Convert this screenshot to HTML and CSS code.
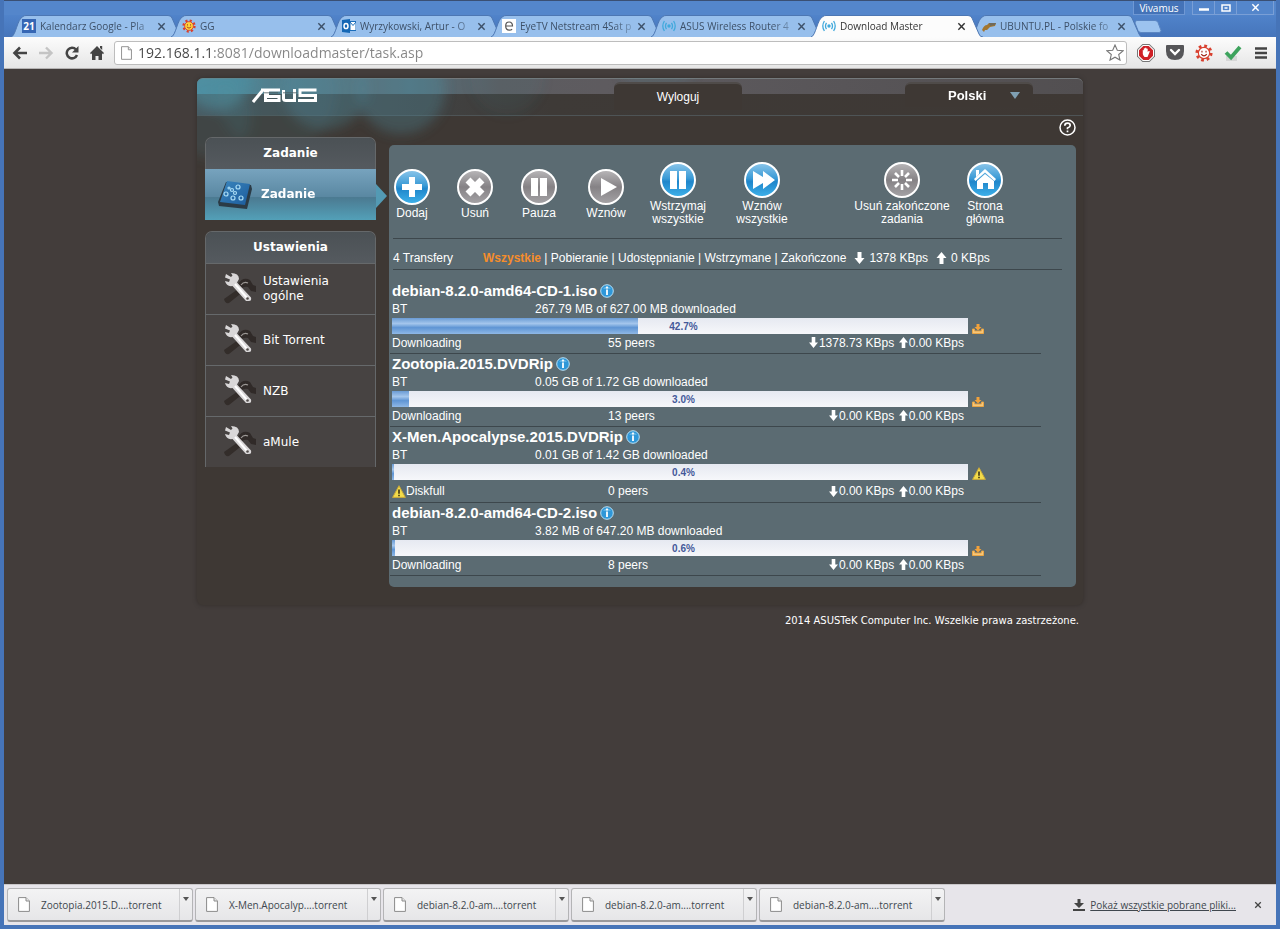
FILE: index.html
```html
<!DOCTYPE html>
<html lang="pl">
<head>
<meta charset="utf-8">
<title>Download Master</title>
<link rel="stylesheet" href="styles.css">
</head>
<body>
<svg class="defs" aria-hidden="true">
  <defs>
    <linearGradient id="g-blue" x1="0" y1="0" x2="0" y2="1"><stop offset="0" stop-color="#8cc6ea"/><stop offset=".45" stop-color="#3b9bd6"/><stop offset=".55" stop-color="#1f86cb"/><stop offset="1" stop-color="#3fb2ea"/></linearGradient>
    <linearGradient id="g-gray" x1="0" y1="0" x2="0" y2="1"><stop offset="0" stop-color="#b9b7b9"/><stop offset=".5" stop-color="#858285"/><stop offset="1" stop-color="#a5a3a6"/></linearGradient>
    <linearGradient id="g-pad" x1="0" y1="0" x2="1" y2="1"><stop offset="0" stop-color="#3b86bd"/><stop offset="1" stop-color="#1c5c9d"/></linearGradient>
    <filter id="soft" x="-30%" y="-60%" width="160%" height="220%"><feGaussianBlur stdDeviation="6"/></filter>
  </defs>
  <symbol id="tab-shape" viewBox="0 0 176 22" preserveAspectRatio="none"><path d="M0 22C5 21 6 4 12 1.500Q13 .5 15 .5H157Q160 .5 161 3L168 19Q169 22 172 22" fill="currentColor" stroke="#4d77b3" stroke-width="1"/></symbol>
  <symbol id="x" viewBox="0 0 10 10"><path d="M1.500 1.500l7 7M8.500 1.500l-7 7" stroke="currentColor" stroke-width="1.600"/></symbol>
  <symbol id="down" viewBox="0 0 10 12"><path d="M3 0h4v6h3L5 12 0 6h3z" fill="#fff"/></symbol>
  <symbol id="up" viewBox="0 0 10 12"><path d="M3 12h4V6h3L5 0 0 6h3z" fill="#fff"/></symbol>
  <symbol id="info" viewBox="0 0 14 14"><circle cx="7" cy="7" r="6.300" fill="#2f97d8" stroke="#b9e0f5"/><path d="M3 4.500a5 4 0 0 1 8 0" fill="#8ccdf0"/><path d="M7 2.600v1.800M7 5.400v5.600" stroke="#fff" stroke-width="1.800"/></symbol>
  <symbol id="warn" viewBox="0 0 14 13"><path d="M7 .7L13.400 12.400H.6z" fill="#f3dc4a" stroke="#c9a93a" stroke-width="1"/><path d="M7 4.500v4.200M7 9.700v1.500" stroke="#3b3213" stroke-width="1.600"/></symbol>
  <symbol id="tray" viewBox="0 0 12 10"><path d="M.5 5h2v2h7V5h2v4.500H.5z" fill="#f6c679" stroke="#e9a545"/><path d="M4.500 0h3v3H9.500L6 6.500 2.500 3h2z" fill="#f3a23a"/></symbol>
  <symbol id="page" viewBox="0 0 12 15"><path d="M.6.6H8L11.400 4V14.400H.6z" fill="#fff" stroke="#8b8b8b"/><path d="M8 .6V4h3.400" fill="#e8e8e8" stroke="#8b8b8b"/></symbol>
  <symbol id="wifi" viewBox="0 0 14 12"><circle cx="7" cy="6" r="1.700" fill="#41a9dc"/><path d="M4.500 2.800q-2 3.200 0 6.400M9.500 2.800q2 3.200 0 6.400M2.400 1Q-.8 6 2.400 11M11.600 1q3.200 5 0 10" fill="none" stroke="#41a9dc" stroke-width="1.300"/></symbol>
  <symbol id="sun" viewBox="0 0 16 16"><circle cx="8" cy="8" r="6.200" fill="none" stroke="#d8402f" stroke-width="2.800" stroke-dasharray="2.400 2.470"/><circle cx="8" cy="8" r="5" fill="currentColor" stroke="#d8402f"/><path d="M6.200 6v1.500M9.800 6v1.500M5.500 9q2.500 3 5 0" fill="none" stroke="#a02a1e"/></symbol>
  <symbol id="tools" viewBox="0 0 36 34"><path d="M3 27l17-12 3 4L8 31q-4 1-5-4z" fill="#332d2a"/><path d="M17 12q5-8 12-4l3 5 3 1v6l-5-1-3-4q-5-1-8 3z" fill="#302a28"/><path d="M20 13q3-4 7-2" fill="none" stroke="#9c9895" stroke-width="1.200"/><path d="M5 2l5 3 1.500-1.500L10 1q8 0 8 6l-2 3.500 14 15q1 4-3 3.500h-2L11.500 14q-6 1-7.500-5l4 1 1-2.500-5-2z" fill="#d9d7d8"/><path d="M14 12l12 14" stroke="#fff" stroke-width="2"/><circle cx="26.500" cy="26.500" r="1.300" fill="#514c4a"/></symbol>
</svg>

<header class="titlebar">
  <button class="user">Vivamus</button>
  <div class="controls">
    <button aria-label="Minimalizuj"><svg width="10" height="8" viewBox="0 0 10 8"><path d="M0 5.500h10" stroke="#fff" stroke-width="2.500"/></svg></button>
    <button aria-label="Maksymalizuj"><svg width="10" height="8" viewBox="0 0 10 8"><path d="M1 1h8v6H1zM3.500 4h3" fill="none" stroke="#fff" stroke-width="1.500"/></svg></button>
    <button class="close" aria-label="Zamknij"><svg width="9" height="9"><use href="#x"/></svg></button>
  </div>
</header>

<nav class="tabs" aria-label="Karty">
  <div class="tab"><svg class="shape"><use href="#tab-shape"/></svg><svg class="fav" viewBox="0 0 14 14"><path d="M0 0h14v14H0z" fill="#3566b4"/><text x="7" y="11" class="cal">21</text></svg><span class="label">Kalendarz Google - Pla</span><button aria-label="Zamknij kartę"><svg width="9" height="9"><use href="#x"/></svg></button></div>
  <div class="tab"><svg class="shape"><use href="#tab-shape"/></svg><svg class="fav sunny"><use href="#sun"/></svg><span class="label">GG</span><button aria-label="Zamknij kartę"><svg width="9" height="9"><use href="#x"/></svg></button></div>
  <div class="tab"><svg class="shape"><use href="#tab-shape"/></svg><svg class="fav" viewBox="0 0 14 14"><path d="M8 2.500h6v9H8z" fill="#fff" stroke="#1a6dba"/><path d="M8 3l3 3.500L14 3" fill="none" stroke="#1a6dba"/><path d="M0 1l8-1v14l-8-1z" fill="#1467b5"/><ellipse cx="4" cy="7" rx="2" ry="2.600" fill="none" stroke="#fff" stroke-width="1.500"/></svg><span class="label">Wyrzykowski, Artur - O</span><button aria-label="Zamknij kartę"><svg width="9" height="9"><use href="#x"/></svg></button></div>
  <div class="tab"><svg class="shape"><use href="#tab-shape"/></svg><svg class="fav" viewBox="0 0 14 14"><path d="M0 0h14v14H0z" fill="#fff"/><path d="M4 7h6.500q0-4-3.400-4T3.700 7t3.600 4.200q1.700 0 2.800-1" fill="none" stroke="#555" stroke-width="1.200"/></svg><span class="label">EyeTV Netstream 4Sat p</span><button aria-label="Zamknij kartę"><svg width="9" height="9"><use href="#x"/></svg></button></div>
  <div class="tab"><svg class="shape"><use href="#tab-shape"/></svg><svg class="fav"><use href="#wifi"/></svg><span class="label">ASUS Wireless Router 4</span><button aria-label="Zamknij kartę"><svg width="9" height="9"><use href="#x"/></svg></button></div>
  <div class="tab active"><svg class="shape"><use href="#tab-shape"/></svg><svg class="fav"><use href="#wifi"/></svg><span class="label">Download Master</span><button aria-label="Zamknij kartę"><svg width="9" height="9"><use href="#x"/></svg></button></div>
  <div class="tab"><svg class="shape"><use href="#tab-shape"/></svg><svg class="fav" viewBox="0 0 14 14"><path d="M0 11q2-5 5-5l2-2 7 0-1 3-5 1-3 3-2 0-1 2z" fill="#a3762f"/><path d="M7 4h7l-1 2-5 1z" fill="#6f6a5c"/></svg><span class="label">UBUNTU.PL - Polskie fo</span><button aria-label="Zamknij kartę"><svg width="9" height="9"><use href="#x"/></svg></button></div>
  <button class="newtab" aria-label="Nowa karta"><svg width="28" height="13" viewBox="0 0 28 13"><path d="M3 .5h18q2 0 3 2l3 8q0 2-2 2H7q-2 0-3-2L1 3Q1 .5 3 .5z" fill="#9cc3ef" stroke="#5b86c2"/></svg></button>
</nav>

<div class="toolbar">
  <button aria-label="Wstecz"><svg width="16" height="14" viewBox="0 0 16 14"><path d="M15 7H3M8 1.500L2.500 7 8 12.500" fill="none" stroke="#444" stroke-width="2.600"/></svg></button>
  <button aria-label="Dalej"><svg width="16" height="14" viewBox="0 0 16 14"><path d="M1 7h12M8 1.500L13.500 7 8 12.500" fill="none" stroke="#c4c4c4" stroke-width="2.400"/></svg></button>
  <button aria-label="Odśwież"><svg width="16" height="14" viewBox="0 0 16 14"><path d="M12 3.500A5.300 5.300 0 1 0 13 9" fill="none" stroke="#444" stroke-width="2.500"/><path d="M14.500 0v6.500H8z" fill="#444"/></svg></button>
  <button aria-label="Strona startowa"><svg width="14" height="14" viewBox="0 0 14 14"><path d="M7 0l7 7-1 1.200-1-.9V14H8.500v-4h-3v4H2V7.300l-1 .9L0 7zM10 0h2.200v4L10 2z" fill="#444"/></svg></button>
  <div class="omnibox">
    <svg width="11" height="14"><use href="#page"/></svg>
    <input type="text" aria-label="Adres" value="192.168.1.1:8081/downloadmaster/task.asp">
    <button aria-label="Dodaj do zakładek"><svg width="18" height="17" viewBox="0 0 18 17"><path d="M9 1l2.300 5.300 5.700.5-4.300 3.700 1.300 5.600L9 13.200 4 16.100l1.300-5.600L1 6.800l5.700-.5z" fill="#fff" stroke="#777" stroke-width="1.100"/></svg></button>
  </div>
  <div class="extensions">
    <button aria-label="Blokada reklam"><svg width="18" height="18" viewBox="0 0 18 18"><path d="M5.500 0h7L18 5.500v7L12.500 18h-7L0 12.500v-7z" fill="#777"/><path d="M5.800 1h6.400L17 5.800v6.400L12.200 17H5.800L1 12.200V5.800z" fill="#fff"/><path d="M6.300 2h5.400L16 6.300v5.400L11.700 16H6.300L2 11.700V6.300z" fill="#cf2027"/><path d="M5.800 6q1-.5 1 1V4.600q1-.8 1.300 0V4q1-.8 1.300 0v.7q1-.6 1.300.3v3l1-1q1.300-.3 1 .8L10.500 13h-3Q5.800 11 5.800 10z" fill="#fff"/></svg></button>
    <button aria-label="Pocket"><svg width="18" height="15" viewBox="0 0 18 15"><path d="M1 0h16q1 0 1 1v5q0 9-9 9T0 6V1q0-1 1-1z" fill="#555558"/><path d="M5 5l4 4 4-4" fill="none" stroke="#fff" stroke-width="2.400" stroke-linecap="round"/></svg></button>
    <button aria-label="GG"><svg class="sunwhite" width="18" height="18"><use href="#sun"/></svg></button>
    <button aria-label="Sprawdź"><svg width="18" height="16" viewBox="0 0 18 16"><path d="M2 11h11v5H2z" fill="#d7d7d7"/><path d="M2 7.500L7 12.500 16 2" fill="none" stroke="#3da35d" stroke-width="3.800"/></svg></button>
    <button aria-label="Menu"><svg width="12" height="12" viewBox="0 0 12 12"><path d="M0 1.500h12M0 6h12M0 10.500h12" stroke="#444" stroke-width="2.500"/></svg></button>
  </div>
</div>

<main class="viewport">
  <div class="frame">
    <svg class="bubbles" aria-hidden="true">
      <g filter="url(#soft)" fill="#4d93a6"><circle cx="20" cy="-2" r="34" opacity=".5"/><circle cx="14" cy="40" r="40" opacity=".15"/><circle cx="128" cy="10" r="42" opacity=".28"/><circle cx="204" cy="12" r="44" opacity=".3"/><circle cx="80" cy="14" r="60" opacity=".13"/><circle cx="310" cy="0" r="36" opacity=".08"/><circle cx="460" cy="-20" r="40" opacity=".12"/></g>
    </svg>
    <header class="banner">
      <div class="brand">
        <svg class="logo" width="66" height="15" viewBox="0 0 66 15" role="img" aria-label="ASUS"><g fill="none" stroke="#fff" stroke-width="3"><path d="M1 14L10.500 2.500"/><path d="M9 2H13.500V14M15 8.500H27V12.500H14M28 2H15.500V8.500M31.500 2V10.500Q31.500 12.500 34 12.500H42.500V1M64.500 2H48V7.500H63.500V12.500H46"/></g><path d="M12 4.800h14M31 4.800h14M49 10h12" stroke="#4d585c" stroke-width=".8"/></svg>
      </div>
      <button class="chip logout">Wyloguj</button>
      <div class="chip lang">
        <select aria-label="Język"><option>Polski</option></select>
        <svg width="10" height="7" viewBox="0 0 10 7" aria-hidden="true"><path d="M0 0h10L5 7z" fill="#7f9fb2"/></svg>
      </div>
    </header>
    <div class="helprow"><button aria-label="Pomoc"><svg width="17" height="17" viewBox="0 0 17 17"><circle cx="8.500" cy="8.500" r="7.500" fill="none" stroke="#fff" stroke-width="1.500"/><path d="M5.800 6.800q0-2.600 2.700-2.600t2.700 2.300q0 1.500-2.700 2.500v1.300M8.500 11.500v1.800" fill="none" stroke="#fff" stroke-width="1.700"/></svg></button></div>

    <div class="columns">
      <aside class="sidebar">
        <section class="menu">
          <h2>Zadanie</h2>
          <a class="item current" href="#zadanie">
            <svg width="38" height="30" viewBox="0 0 38 30"><path d="M10 2L35 5l1 4-5 20L3 26l-1-4z" fill="#2b3b46"/><path d="M11 1l23 3-5 21-25-3z" fill="url(#g-pad)"/><g fill="none" stroke="#a9dcf5" stroke-width="1.200"><circle cx="13" cy="8" r="1"/><circle cx="16" cy="10" r="1.500"/><circle cx="22" cy="7" r="2"/><circle cx="10" cy="14" r="2"/><circle cx="19" cy="13" r="1.500"/><circle cx="17" cy="18" r="2"/><circle cx="25" cy="18" r="2"/></g></svg>
            <span>Zadanie</span>
          </a>
        </section>
        <section class="menu">
          <h2>Ustawienia</h2>
          <a class="item" href="#ogolne"><svg width="36" height="34"><use href="#tools"/></svg><span>Ustawienia ogólne</span></a>
          <a class="item" href="#bt"><svg width="36" height="34"><use href="#tools"/></svg><span>Bit Torrent</span></a>
          <a class="item" href="#nzb"><svg width="36" height="34"><use href="#tools"/></svg><span>NZB</span></a>
          <a class="item" href="#amule"><svg width="36" height="34"><use href="#tools"/></svg><span>aMule</span></a>
        </section>
      </aside>

      <section class="panel">
        <div class="actions">
          <button><svg class="ico" viewBox="0 0 36 36"><circle cx="18" cy="18" r="17" fill="url(#g-blue)" stroke="#fff" stroke-width="2"/><path d="M15 8h6v7h7v6h-7v7h-6v-7H8v-6h7z" fill="#fff"/></svg><span>Dodaj</span></button>
          <button><svg class="ico" viewBox="0 0 36 36"><circle cx="18" cy="18" r="17" fill="url(#g-gray)" stroke="#fff" stroke-width="2"/><path d="M11 11l14 14M25 11L11 25" stroke="#fff" stroke-width="7"/></svg><span>Usuń</span></button>
          <button><svg class="ico" viewBox="0 0 36 36"><circle cx="18" cy="18" r="17" fill="url(#g-gray)" stroke="#fff" stroke-width="2"/><path d="M10 9h7v18h-7zM19 9h7v18h-7z" fill="#fff"/></svg><span>Pauza</span></button>
          <button><svg class="ico" viewBox="0 0 36 36"><circle cx="18" cy="18" r="17" fill="url(#g-gray)" stroke="#fff" stroke-width="2"/><path d="M13 9l16 9-16 9z" fill="#fff"/></svg><span>Wznów</span></button>
          <button class="pair"><svg class="ico" viewBox="0 0 36 36"><circle cx="18" cy="18" r="17" fill="url(#g-blue)" stroke="#fff" stroke-width="2"/><path d="M10 9h7v18h-7zM19 9h7v18h-7z" fill="#fff"/></svg><span>Wstrzymaj wszystkie</span></button>
          <button class="pair"><svg class="ico" viewBox="0 0 36 36"><circle cx="18" cy="18" r="17" fill="url(#g-blue)" stroke="#fff" stroke-width="2"/><path d="M9 9l10 6V9l12 9-12 9v-6L9 27z" fill="#fff"/></svg><span>Wznów wszystkie</span></button>
          <button class="wide"><svg class="ico" viewBox="0 0 36 36"><circle cx="18" cy="18" r="17" fill="url(#g-gray)" stroke="#fff" stroke-width="2"/><path d="M18 8v6M18 22v6M8 18h6M22 18h6M11 11l4 4M21 21l4 4M25 11l-4 4M15 21l-4 4" stroke="#fff" stroke-width="2.600"/></svg><span>Usuń zakończone zadania</span></button>
          <button class="pair"><svg class="ico" viewBox="0 0 36 36"><circle cx="18" cy="18" r="17" fill="url(#g-blue)" stroke="#fff" stroke-width="2"/><path d="M7 17L18 7l11 10-1.500 2L18 10.500 8.500 19zM9 8h3v4l-3 3zM10 19l8-7 9 7v8h-6v-6h-5v6h-6z" fill="#fff"/></svg><span>Strona główna</span></button>
        </div>

        <div class="filters">
          <span class="count">4 Transfery</span>
          <span class="links"><a class="on" href="#w">Wszystkie</a> | <a href="#p">Pobieranie</a> | <a href="#u">Udostępnianie</a> | <a href="#s">Wstrzymane</a> | <a href="#z">Zakończone</a></span>
          <span class="total"><svg width="11" height="12"><use href="#down"/></svg>1378 KBps</span>
          <span class="total"><svg width="11" height="12"><use href="#up"/></svg>0 KBps</span>
        </div>

        <ul class="tasks">
          <li>
            <h3>debian-8.2.0-amd64-CD-1.iso <svg width="14" height="14"><use href="#info"/></svg></h3>
            <div class="meta"><span>BT</span><span>267.79 MB of 627.00 MB downloaded</span></div>
            <div class="progress"><div class="bar"><div class="fill" style="width:42.7%"></div><span class="pct">42.7%</span></div><svg width="12" height="10"><use href="#tray"/></svg></div>
            <div class="status"><span>Downloading</span><span>55 peers</span><span class="speed"><svg width="9" height="11"><use href="#down"/></svg>1378.73 KBps <svg width="9" height="11"><use href="#up"/></svg>0.00 KBps</span></div>
          </li>
          <li>
            <h3>Zootopia.2015.DVDRip <svg width="14" height="14"><use href="#info"/></svg></h3>
            <div class="meta"><span>BT</span><span>0.05 GB of 1.72 GB downloaded</span></div>
            <div class="progress"><div class="bar"><div class="fill" style="width:3%"></div><span class="pct">3.0%</span></div><svg width="12" height="10"><use href="#tray"/></svg></div>
            <div class="status"><span>Downloading</span><span>13 peers</span><span class="speed"><svg width="9" height="11"><use href="#down"/></svg>0.00 KBps <svg width="9" height="11"><use href="#up"/></svg>0.00 KBps</span></div>
          </li>
          <li>
            <h3>X-Men.Apocalypse.2015.DVDRip <svg width="14" height="14"><use href="#info"/></svg></h3>
            <div class="meta"><span>BT</span><span>0.01 GB of 1.42 GB downloaded</span></div>
            <div class="progress"><div class="bar"><div class="fill" style="width:.4%"></div><span class="pct">0.4%</span></div><svg width="14" height="13"><use href="#warn"/></svg></div>
            <div class="status full"><span><svg width="14" height="13"><use href="#warn"/></svg>Diskfull</span><span>0 peers</span><span class="speed"><svg width="9" height="11"><use href="#down"/></svg>0.00 KBps <svg width="9" height="11"><use href="#up"/></svg>0.00 KBps</span></div>
          </li>
          <li>
            <h3>debian-8.2.0-amd64-CD-2.iso <svg width="14" height="14"><use href="#info"/></svg></h3>
            <div class="meta"><span>BT</span><span>3.82 MB of 647.20 MB downloaded</span></div>
            <div class="progress"><div class="bar"><div class="fill" style="width:.6%"></div><span class="pct">0.6%</span></div><svg width="12" height="10"><use href="#tray"/></svg></div>
            <div class="status"><span>Downloading</span><span>8 peers</span><span class="speed"><svg width="9" height="11"><use href="#down"/></svg>0.00 KBps <svg width="9" height="11"><use href="#up"/></svg>0.00 KBps</span></div>
          </li>
        </ul>
      </section>
    </div>
  </div>
  <footer class="copyright">2014 ASUSTeK Computer Inc. Wszelkie prawa zastrzeżone.</footer>
</main>

<footer class="shelf">
  <div class="file"><button class="open"><svg width="12" height="15"><use href="#page"/></svg>Zootopia.2015.D....torrent</button><button class="more" aria-label="Więcej"></button></div>
  <div class="file"><button class="open"><svg width="12" height="15"><use href="#page"/></svg>X-Men.Apocalyp....torrent</button><button class="more" aria-label="Więcej"></button></div>
  <div class="file"><button class="open"><svg width="12" height="15"><use href="#page"/></svg>debian-8.2.0-am....torrent</button><button class="more" aria-label="Więcej"></button></div>
  <div class="file"><button class="open"><svg width="12" height="15"><use href="#page"/></svg>debian-8.2.0-am....torrent</button><button class="more" aria-label="Więcej"></button></div>
  <div class="file"><button class="open"><svg width="12" height="15"><use href="#page"/></svg>debian-8.2.0-am....torrent</button><button class="more" aria-label="Więcej"></button></div>
  <div class="all"><svg width="12" height="12" viewBox="0 0 12 12"><path d="M4.500 0h3v4H11L6 9 1 4h3.500zM0 10h12v2H0z" fill="#444"/></svg><a href="#downloads">Pokaż wszystkie pobrane pliki...</a></div>
  <button class="hide" aria-label="Zamknij pasek"><svg width="8" height="8"><use href="#x"/></svg></button>
</footer>
</body>
</html>
```
FILE: styles.css
```css
* { box-sizing: border-box; }

body {
  margin: 0;
  min-height: 100vh;
  display: flex;
  flex-direction: column;
  border: solid #4674b8;
  border-width: 0 4px 4px;
  background: #433d3b;
  font: 12px/14px "Liberation Sans", Arial, sans-serif;
  color: #fff;
}

button {
  margin: 0;
  padding: 0;
  border: 0;
  background: none;
  font: inherit;
  color: inherit;
}

svg { flex: none; }
a { color: inherit; text-decoration: none; }
.defs { position: absolute; width: 0; height: 0; }

/* Window chrome */
.titlebar {
  display: flex;
  justify-content: flex-end;
  gap: 7px;
  height: 15px;
  padding-right: 2px;
  border-top: 1px solid #3a4f73;
  background: #5486cb;
  font: 10px/13px "Open Sans", sans-serif;
}
.user { width: 52px; background: #4473b8; border: 1px solid #6f98d4; border-top: 0; line-height: 14px; }
.controls { display: flex; width: 82px; border: 1px solid #7a9fd6; border-top: 0; }
.controls button { display: flex; align-items: center; justify-content: center; width: 22px; border-right: 1px solid #7a9fd6; }
.controls .close { flex: 1; border: 0; }

.tabs {
  display: flex;
  align-items: flex-end;
  height: 22px;
  padding-left: 7px;
  background: linear-gradient(#5083ca, #4675bb);
  font: 10px/22px "Open Sans", "Noto Sans", sans-serif;
  color: #3d5068;
}
.tab {
  position: relative;
  display: flex;
  align-items: center;
  width: 176px;
  height: 22px;
  padding: 0 21px 0 11px;
  margin-right: -16px;
}
.tab .shape { position: absolute; inset: 0; width: 100%; height: 100%; color: #97bfec; }
.tab.active { z-index: 1; color: #333; }
.tab.active .shape { color: #fcfcfc; }
.fav { position: relative; width: 14px; height: 14px; }
.sunny { color: #ffd43b; }
.sunwhite { color: #fff; }
.cal { font: bold 10px "Open Sans", sans-serif; fill: #fff; text-anchor: middle; }
.tab .label {
  position: relative;
  flex: 1;
  min-width: 0;
  margin-left: 4px;
  white-space: nowrap;
  mask-image: linear-gradient(90deg, #000 92px, transparent 122px);
}
.tab button { position: relative; display: flex; width: 12px; justify-content: flex-end; }
.newtab { display: flex; margin: 0 0 4px 3px; }

.toolbar {
  display: flex;
  align-items: center;
  height: 32px;
  padding: 0 9px 0 8px;
  gap: 10px;
  background: linear-gradient(#fcfcfc, #e6e6e6);
  border-bottom: 1px solid #b6b4b4;
}
.toolbar button { display: flex; }
.omnibox {
  flex: 1;
  display: flex;
  align-items: center;
  height: 24px;
  padding: 0 2px 0 6px;
  gap: 6px;
  background: #fff;
  border: 1px solid #bdbdbd;
  border-radius: 3px;
}
.omnibox input {
  flex: 1;
  min-width: 0;
  padding: 0;
  border: 0;
  outline: 0;
  font: 14px/20px "Open Sans", "Noto Sans", sans-serif;
  background: linear-gradient(90deg, #444 75px, #858585 75px);
  background-clip: text;
  -webkit-text-fill-color: transparent;
}
.extensions { display: flex; align-items: center; gap: 11px; }
.extensions button:last-child { margin: 0 0 0 2px; }

/* Page */
.viewport { flex: 1; padding: 9px 8px 0; }
.frame {
  position: relative;
  max-width: 886px;
  margin: 0 auto;
  padding-bottom: 18px;
  background: #3e3834;
  border-radius: 6px;
  box-shadow: 0 0 4px #332e2b;
}
.bubbles { position: absolute; inset: 0 0 auto; width: 100%; height: 120px; z-index: 1; pointer-events: none; border-radius: 6px; }
.banner {
  display: grid;
  grid-template-columns: 1fr 128px 163px 128px 50px;
  height: 38px;
  background:
    linear-gradient(90deg, #4e8a9e, #5b6a72 20%, #53707b 24%, #5c5c60 34%, #5e5b5f 46%, #524f51) top / 100% 15px no-repeat,
    linear-gradient(90deg, #475257, #3e3a37 40%, #3e3834);
  border-top: 1px solid #74797c;
  border-bottom: 1px solid #4e5456;
  border-radius: 6px 6px 0 0;
}
.brand { padding: 9px 0 0 55px; }
.logo { position: relative; z-index: 2; display: block; }
.chip {
  position: relative;
  z-index: 2;
  margin-top: 3px;
  background: #3e3834;
  border-top: 2px solid #4f4b49;
  border-radius: 6px 6px 0 0;
}
.logout { height: 28px; }
.lang { grid-column: 4; display: flex; align-items: center; height: 25px; }
.lang select {
  width: 105px;
  padding: 0 0 0 43px;
  border: 0;
  appearance: none;
  background: transparent;
  font: bold 13px/18px "Liberation Sans", Arial, sans-serif;
  color: #fff;
}
.helprow { display: flex; justify-content: flex-end; height: 21px; padding: 3px 7px 0; }
.helprow button { display: flex; }

.columns { display: flex; align-items: flex-start; gap: 13px; padding: 0 7px 0 8px; }
.sidebar {
  position: relative;
  z-index: 2;
  width: 171px;
  display: flex;
  flex-direction: column;
  gap: 11px;
  font: 12px/15px "DejaVu Sans", Verdana, sans-serif;
}
.menu { border: solid #65686a; border-width: 1px 1px 0; border-radius: 7px 7px 0 0; background: #474342; }
.menu h2 {
  margin: 0;
  font-size: 12px;
  line-height: 31px;
  text-align: center;
  background: linear-gradient(#4b5155, #555a5f);
  border-radius: 6px 6px 0 0;
}
.item {
  display: flex;
  align-items: center;
  gap: 6px;
  min-height: 51px;
  padding: 0 40px 0 15px;
  border-top: 1px solid #66696b;
}
.current {
  position: relative;
  gap: 7px;
  padding: 0 0 0 11px;
  border-top: 0;
  margin: 0 -1px;
  font-weight: bold;
  background: linear-gradient(#77a3be, #5a88a2 54%, #4b7a91 56%, #53a0b8);
}
.current::after {
  content: "";
  position: absolute;
  left: 100%;
  top: 15px;
  border: solid transparent;
  border-width: 12px 0 12px 11px;
  border-left-color: #539ab4;
}

.panel {
  flex: 1;
  min-width: 0;
  margin-top: 8px;
  padding: 17px 14px 11px 0;
  background: #5b6b72;
  border-radius: 5px;
}
.actions {
  display: grid;
  grid-template-columns: 63px 64px 67px 66px 84px 121px 102px 54px;
  align-items: center;
  min-height: 64px;
  line-height: 13px;
}
.actions button { display: flex; flex-direction: column; align-items: center; gap: 2px; width: 46px; }
.actions .pair { width: 58px; }
.actions .wide { width: 96px; }
.ico { width: 36px; height: 36px; }

.filters {
  display: flex;
  align-items: center;
  gap: 8px;
  margin: 12px 0 11px 4px;
  height: 32px;
  padding-top: 8px;
  border: solid #3d474c;
  border-width: 1px 0;
}
.count { width: 82px; }
.on { color: #f58d2c; font-weight: bold; }
.total { display: flex; align-items: center; gap: 4px; }

.tasks { list-style: none; margin: 0 21px 0 1px; padding: 0; }
.tasks li { padding: 0 2px; border-bottom: 1px solid #3d474c; }
.tasks h3 { display: flex; align-items: center; gap: 3px; margin: 0; font-size: 15px; line-height: 20px; }
.meta { display: grid; grid-template-columns: 143px 1fr; line-height: 16px; }
.progress { display: flex; align-items: flex-end; gap: 4px; height: 17px; }
.bar {
  position: relative;
  display: flex;
  width: 576px;
  height: 16px;
  background: linear-gradient(#e6e9f1, #f6f7fa);
}
.fill { background: linear-gradient(#6a9bd4, #a4c6ec 35%, #5f95d4 60%, #8fb8e6); }
.pct {
  position: absolute;
  inset: 0;
  padding-left: 7px;
  text-align: center;
  font-weight: bold;
  font-size: 10px;
  line-height: 17px;
  color: #44599a;
}
.status { display: grid; grid-template-columns: 216px 100px 256px; align-items: center; height: 19px; padding-bottom: 2px; }
.status > span { display: flex; align-items: center; }
.status .speed { justify-content: flex-end; gap: 1px; white-space: pre; }
.status.full { height: 22px; padding: 0; }

.copyright {
  max-width: 886px;
  margin: 0 auto;
  padding: 8px 4px 0;
  text-align: right;
  font: 10px/15px "DejaVu Sans", Verdana, sans-serif;
  color: #fff;
}

/* Download shelf */
.shelf {
  display: flex;
  align-items: center;
  gap: 2px;
  height: 41px;
  padding: 0 14px 0 3px;
  background: #e7e5ea;
  border-top: 1px solid #c9c7c9;
  font: 10px/32px "Open Sans", "Noto Sans", sans-serif;
  color: #40474e;
}
.file {
  display: flex;
  width: 186px;
  height: 34px;
  background: linear-gradient(#f3f3f4, #e6e6e8);
  border: 1px solid #b4b4b6;
  border-bottom: 2px solid #98989b;
  border-radius: 3px;
}
.open { flex: 1; display: flex; align-items: center; gap: 11px; padding-left: 10px; white-space: nowrap; }
.more { width: 13px; border-left: 1px solid #cfcfd1; }
.more::before { content: ""; display: block; margin: -8px auto 0; width: 0; border: 3px solid transparent; border-top: 4px solid #555; border-bottom: 0; }
.all { display: flex; align-items: center; gap: 5px; margin-left: auto; line-height: 16px; }
.all a { text-decoration: underline; }
.hide { display: flex; margin-left: 16px; color: #444; }
```
